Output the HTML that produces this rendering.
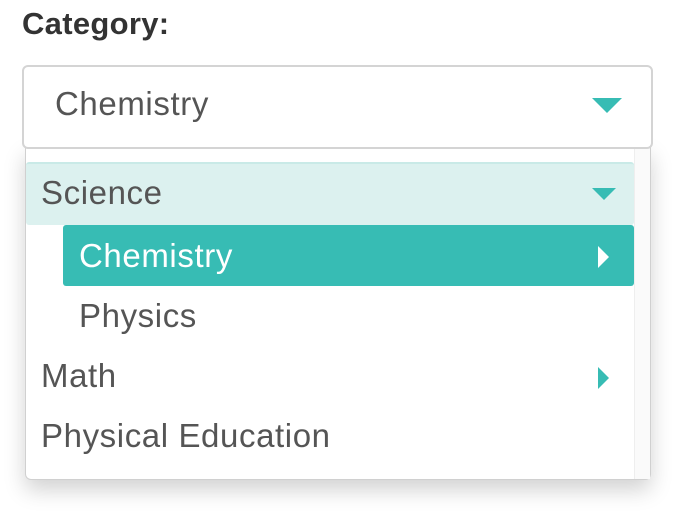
<!DOCTYPE html>
<html><head><style>
body{margin:0;width:685px;height:521px;background:#fff;font-family:"Liberation Sans",sans-serif;position:relative;overflow:hidden;color:#555}
.a{position:absolute}
.lbl{left:22px;top:6px;font-size:31px;font-weight:bold;color:#333;letter-spacing:0.3px}
.sel{left:22px;top:65px;width:627px;height:80px;border:2px solid #d4d4d4;border-radius:6px;background:#fff;z-index:2}
.dd{left:25px;top:146px;width:624px;height:333px;background:#fff;border:1px solid #d0d0d0;border-top:none;border-radius:0 0 6px 6px;box-shadow:0 10px 22px rgba(0,0,0,.18)}
.gut{left:634px;top:146px;width:15px;height:333px;background:#fafafa;border-left:1px solid #eee}
.t{font-size:33px;letter-spacing:0.6px;color:#555;line-height:38px}
.tri{width:0;height:0;position:absolute}
</style></head><body>
<div class="a lbl">Category:</div>
<div class="a dd"></div>
<div class="a gut"></div>
<div class="a sel"><div class="a t" style="left:31px;top:18px">Chemistry</div>
<div class="tri" style="left:568px;top:31px;border-left:15px solid transparent;border-right:15px solid transparent;border-top:15px solid #37bcb4"></div></div>
<div class="a" style="left:26px;top:162px;width:608px;height:61px;background:#dcf1ef;border-top:2px solid #c9eae7;border-radius:3px"></div>
<div class="a t" style="left:41px;top:174px">Science</div>
<div class="tri" style="left:592px;top:188px;border-left:12px solid transparent;border-right:12px solid transparent;border-top:12px solid #37bcb4"></div>
<div class="a" style="left:63px;top:225px;width:571px;height:61px;background:#37bcb4;border-radius:3px"></div>
<div class="a t" style="left:79px;top:237px;color:#fff">Chemistry</div>
<div class="tri" style="left:598px;top:246px;border-top:11px solid transparent;border-bottom:11px solid transparent;border-left:11px solid #fff"></div>
<div class="a t" style="left:79px;top:297px">Physics</div>
<div class="a t" style="left:41px;top:357px">Math</div>
<div class="tri" style="left:598px;top:367px;border-top:11px solid transparent;border-bottom:11px solid transparent;border-left:11px solid #37bcb4"></div>
<div class="a t" style="left:41px;top:417px">Physical Education</div>
</body></html>
